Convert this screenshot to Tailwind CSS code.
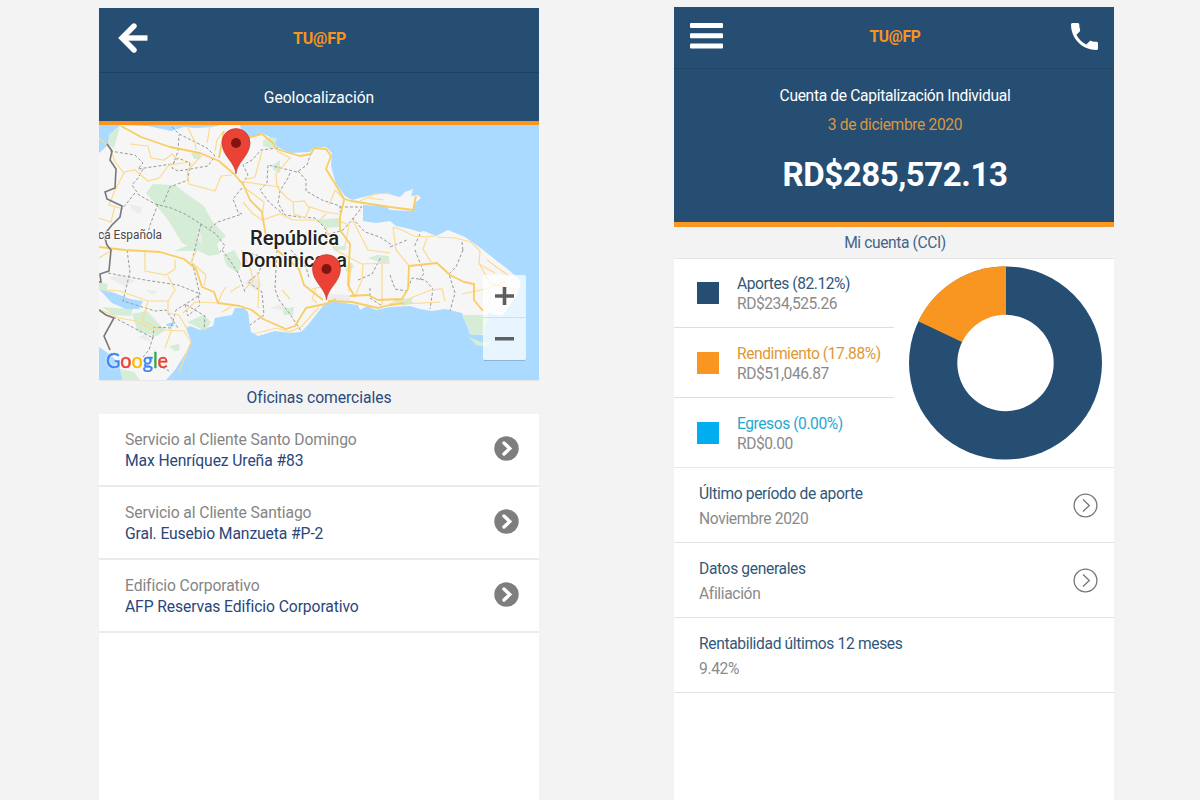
<!DOCTYPE html>
<html lang="es">
<head>
<meta charset="utf-8">
<title>TU@FP</title>
<script src="https://cdn.jsdelivr.net/npm/@tailwindcss/browser@4"></script>
</head>
<body class="w-[1200px] h-[800px] overflow-hidden bg-[#f3f3f3] font-['Roboto',sans-serif]">
<main class="flex h-[800px] pl-[99px] gap-[135px]">

  <section class="w-[440px] pt-2 shrink-0 flex flex-col">
    <header class="h-[65px] bg-[#254e72] flex items-center border-b border-[#1f4262] px-[19px]">
      <svg class="w-[31px] h-[30px] -mt-1 shrink-0" viewBox="0 0 31 30" fill="none" stroke="#fff" stroke-width="5.4"><path d="M29.500 15H5" /><path d="M16 3 4 15l12 12" stroke-linecap="round"/></svg>
      <h1 class="flex-1 text-center pr-[30px] -mt-[3px] text-[16px] tracking-[-0.15px] leading-5 font-bold text-[#f7941f]">TU@FP</h1>
    </header>
    <div class="h-12 bg-[#254e72] flex items-center justify-center text-white text-[15.6px] leading-5 pt-[1px]">Geolocalización</div>
    <div class="h-1 bg-[#fa941d]"></div>
    <svg class="w-[440px] h-[255px] block shrink-0" viewBox="99 125 440 255" font-family="Roboto, sans-serif">
      <rect x="99" y="125" width="440" height="255" fill="#aadaff"/>
      <path fill="#f6f6f6" d="M99 153 108 145 110 134 121 125 148 126 171 131 184 127 195 128 212 127 220 125H240L243 136 252 137 262 133 270 137 277 147 290 153 310 152 313 148 326 147 332 153 331 166 336 184 345 196 352 200 371 195 385 193 400 197 405 192 413 189 411 196 418 195 421 198 415 203 413 211 390 210 385 206 363 205 363 221 376 223 390 221 396 226 410 229 420 232 424 231 436 236 448 230 465 237 482 249 497 261 505 267 517 277 521 283 517 295 505 312 502 316 488 313 483 335 470 334 462 313 445 309 432 311 420 309 410 306 390 307 376 310 367 306 360 310 358 305 330 301 322 307 308 325 301 332 290 333 275 331 258 336 251 332 250 326 248 312 244 308 235 308 232 315 220 317 215 318 213 326 200 330 190 326 186 328 191 341 188 349 175 370 166 380H123L118 362 108 353 99 347Z"/>
      <g fill="#d5edd7">
        <path d="M109 134 120 127 114 148 108 145Z"/>
        <path d="M153 184 175 185 188 195 204 206 212 221 226 236 217 244 220 254 209 256 182 243 168 220 146 193Z M191 153h9v6h-6z M273 149l4-11-8-1-6 4v5z M273 165l7-5v13l-7-3z M315 220l24-2v9l-13 1z M333 246h13v4h-10z"/>
        <path d="M174 251h26l-6-8z M223 255l11-5 8 14-4 9-11-7z M99 282l9 2-3 10-6-4z M102 307 133 309 131 316 113 315Z M132 314 147 311 165 330 157 336 138 332Z M187 322 204 315 211 322 205 331Z M169 346l10-2 1 6-5 1z M120 369l14 3 6 8h-17z M282 309l12-2-1 8h-9z M368 258l9-3 12 1v6l-8 1z M345 270l5-8 4 4-5 8z M393 300l18-2 2 5-10 3z M462 315H489l-6 19-12 1z M469 337l12 5h10l-3 5-12-2z"/>
      </g>
      <g fill="#ececec"><path d="M130 204l12 3-2 7-8-4z M108 278l12-3 15 6-10 5z M145 290l13 1-5 4z M197 231l5 4v9l-5-4z M270 308l14-5v8z M325 294l25 1v7l-20-1z M244 283l10-7 8 8-4 7z M138 337l8-3 6 9z"/></g>
      <path fill="#aadaff" d="M100 290 112 292 130 299 143 301 139 309 126 309 112 303Z M166 324l8-2-1 5-6-1z"/>
      <g fill="none" stroke="#999" stroke-width="1" stroke-dasharray="3 2">
        <path d="M110 151 135 155 143 163 138 169 172 164 178 158 190 163"/>
        <path d="M172 127 179 134 207 148 215 156 208 166 178 171 172 168 178 151 179 135"/>
        <path d="M190 163 188 180 170 187 163 204"/>
        <path d="M143 169 138 178 132 185 139 195 155 204 171 208 185 214 201 224 216 234 225 246 220 252"/>
        <path d="M135 193 122 209 M158 204 150 225 147 237"/>
        <path d="M242 188 233 199 238 212 242 214 218 222 209 229"/>
        <path d="M278 148 261 150 252 160 243 165 248 175 241 186 M311 153 307 165 297 172 289 170 268 165 267 183 260 190 269 202 283 214 M298 171 306 180 306 191 322 200 340 206 340 212 M290 173 288 178 280 191 278 203 285 215 300 217 315 218 325 228 327 240"/>
        <path d="M340 207 362 207 352 220 343 230 327 235 M352 218 365 232 380 237 393 246"/>
        <path d="M127 250 130 272 123 301 155 311 166 310 178 328 M108 273 145 280 178 285 198 293 200 305 188 316 185 304 205 316 204 330"/>
        <path d="M201 224 192 261 200 295 176 310 171 328 154 327 153 338 115 318"/>
        <path d="M153 337 149 350 143 357 M158 365 169 371 M222 250 231 262 238 273 245 292 M241 251 264 257 259 273 248 282 262 292 264 315 250 325"/>
        <path d="M277 250 275 289 279 300 290 314 301 331 M291 250 306 267 309 278 M340 270 328 282 M358 280 372 274 381 257 M370 288 370 298 382 306"/>
        <path d="M390 275 395 289 407 291 412 278 425 280 433 289 430 309 M415 250 424 273 419 281 M463 250 456 267 449 274 455 293 450 311 M420 234 414 247 M462 242 463 251 M390 247 407 240"/>
      </g>
      <g fill="none" stroke="#fbdb8e" stroke-width="1.2">
        <path d="M99 138 111 149 115 162 124 173 115 190 109 205 120 208 M124 172 135 170 148 181 159 178 169 165 190 162 M130 144 148 146 151 158 164 160 172 154 178 160 M188 128 195 142 196 150 M210 126 207 143 M224 131 217 140 215 151 M202 155 187 171 189 184 215 191 221 176 232 175"/>
        <path d="M277 151 290 158 276 174 277 187 287 198 293 202 294 214 305 218 310 207 325 212 339 214 M262 151 255 177 244 180 M238 181 280 187 M293 202 304 201 310 209 M262 218 264 202 245 188 M243 202 252 213 262 220 280 214 293 220 320 220 326 214"/>
        <path d="M345 200 335 190 329 205 M360 201 375 194 390 193 M369 198l15 2"/>
        <path d="M99 218 111 222 115 206 M99 258 112 250 M145 250 145 271 166 275 175 269 175 260 M105 290 120 291 148 301 168 301 175 290 168 276 M148 301 142 321 162 330 184 331 191 342 179 372 M168 301 168 313 179 315 187 329 M196 251 191 262 206 275 204 286 M183 313 195 302 219 303 M99 309 119 318 136 321 155 331 M172 329 165 348"/>
        <path d="M218 303 222 293 226 287 M222 312 231 307 M242 251 251 270 253 281 245 289 M257 272 259 281 258 308 M282 290 290 299 M240 286 230 292 M312 289 325 286 337 282 M316 287 312 299 317 303 M253 334 277 328 290 332 302 326 319 307"/>
        <path d="M336 220 349 225 345 246 M352 219 368 250 390 253 M326 228 334 249 350 258 362 264 390 263 M351 263 349 292 M363 264 362 280 355 296 M382 264 382 307"/>
        <path d="M393 227 402 230 414 236 425 237 435 236 M393 227 396 250 410 267 M427 238 423 249 431 262 M437 237 455 238 471 242 480 251 479 264 495 273 M404 304 413 297 431 290 442 289 445 301 M404 304 440 302 M462 294 481 290 505 282 M480 265 490 283 518 290 M487 260 509 276 M390 304 403 299"/>
      </g>
      <g fill="none" stroke="#f9cd62" stroke-width="1.8" stroke-linejoin="round">
        <path d="M121 126 141 137 170 147 200 153 219 161 234 174 243 184 250 200 262 212 264 225 267 243"/>
        <path d="M224 131 219 158 M248 138 262 134 273 143 276 149 300 156 311 154 314 148 326 149 331 156 326 169 337 187 344 199 351 201 390 207 413 210 416 196"/>
        <path d="M344 200 340 217 340 230 350 244 349 263 348 285 355 297 M99 247 125 250 160 252 184 259 196 269 202 287 214 292 218 303 240 306 252 310 263 319 286 329 295 326 306 308 325 304 336 299"/>
        <path d="M276 249 299 269 304 285 323 300 M328 301 352 302 M350 296 368 295 378 300 402 299 408 289 409 266 437 263 450 275 464 282 474 284 474 300 483 311 M352 302 378 308 390 305 404 303"/>
      </g>
      <path fill="none" stroke="#787878" stroke-width="1.6" d="M107 144 112 151 110 160 116 169 115 188 105 192 107 199 122 206 120 217 112 225 104 235 107 245 111 250 109 271 100 274 101 282 99 282 M99 310 106 315 114 318 104 336 110 350"/>
      <g fill="#222" stroke="#fff" stroke-width="2" stroke-opacity=".75" paint-order="stroke">
        <text x="98" y="239" font-size="12.5" fill="#484848" textLength="64" lengthAdjust="spacingAndGlyphs">ca Española</text>
        <text x="250" y="245" font-size="20" font-weight="500" textLength="89" lengthAdjust="spacingAndGlyphs">República</text>
        <text x="241" y="267" font-size="20" font-weight="500" textLength="106" lengthAdjust="spacingAndGlyphs">Dominicana</text>
      </g>
      <defs>
        <g id="pin"><path fill="#ea4335" stroke="#bd3228" stroke-width=".6" d="M0 0C-1-12-14-18-14-31.500A14 14 0 0 1 14-31.500C14-18 1-12 0 0Z"/><circle cy="-31" r="5" fill="#811411"/></g>
      </defs>
      <use href="#pin" x="236" y="174"/>
      <use href="#pin" x="326.500" y="300"/>
      <path d="M484 360.500h41" stroke="#8fb4d2"/>
      <rect x="483" y="275" width="43" height="85" rx="2" fill="#fff" fill-opacity=".72"/>
      <path d="M483 317.500h43" stroke="#d5dfe7"/>
      <path d="M495 296h19M504.500 287v18M495 338.700h19" stroke="#5e5e5e" stroke-width="3.600"/>
      <text class="drop-shadow-[0_0_1px_#fff]" x="106" y="367.500" font-family="Lato, sans-serif" font-size="21" textLength="62" lengthAdjust="spacingAndGlyphs" stroke-width=".5"><tspan fill="#4285f4" stroke="#4285f4">G</tspan><tspan fill="#ea4335" stroke="#ea4335">o</tspan><tspan fill="#fbbc05" stroke="#fbbc05">o</tspan><tspan fill="#4285f4" stroke="#4285f4">g</tspan><tspan fill="#34a853" stroke="#34a853">l</tspan><tspan fill="#ea4335" stroke="#ea4335">e</tspan></text>
    </svg>
    <h2 class="h-[34px] shrink-0 border-t border-[#e5e7e9] flex items-center justify-center text-[15.7px] tracking-[-0.08px] leading-5 text-[#2b4a7a]">Oficinas comerciales</h2>
    <div class="flex-1 bg-white text-[15.7px] tracking-[-0.11px] leading-[21px]">
      <div class="h-[73px] flex items-center justify-between pl-[26px] pr-5 border-b-2 border-[#ebebeb]">
        <div class="pt-[1px]"><p class="text-[#858585]">Servicio al Cliente Santo Domingo</p><p class="text-[#2b467a]">Max Henríquez Ureña #83</p></div>
        <svg class="w-[25px] h-[25px] -mt-[3px]" viewBox="0 0 25 25"><circle cx="12.500" cy="12.500" r="12.200" fill="#7e7e7e"/><path d="m10 7 5.800 5.500L10 18" fill="none" stroke="#fff" stroke-width="3.400" stroke-linecap="round"/></svg>
      </div>
      <div class="h-[73px] flex items-center justify-between pl-[26px] pr-5 border-b-2 border-[#ebebeb]">
        <div class="pt-[1px]"><p class="text-[#858585]">Servicio al Cliente Santiago</p><p class="text-[#2b467a]">Gral. Eusebio Manzueta #P-2</p></div>
        <svg class="w-[25px] h-[25px] -mt-[3px]" viewBox="0 0 25 25"><circle cx="12.500" cy="12.500" r="12.200" fill="#7e7e7e"/><path d="m10 7 5.800 5.500L10 18" fill="none" stroke="#fff" stroke-width="3.400" stroke-linecap="round"/></svg>
      </div>
      <div class="h-[73px] flex items-center justify-between pl-[26px] pr-5 border-b-2 border-[#ebebeb]">
        <div class="pt-[1px]"><p class="text-[#858585]">Edificio Corporativo</p><p class="text-[#2b467a]">AFP Reservas Edificio Corporativo</p></div>
        <svg class="w-[25px] h-[25px] -mt-[3px]" viewBox="0 0 25 25"><circle cx="12.500" cy="12.500" r="12.200" fill="#7e7e7e"/><path d="m10 7 5.800 5.500L10 18" fill="none" stroke="#fff" stroke-width="3.400" stroke-linecap="round"/></svg>
      </div>
    </div>
  </section>

  <section class="w-[440px] pt-[7px] shrink-0 flex flex-col">
    <header class="h-[62px] bg-[#254e72] flex items-center justify-between border-b border-[#1f4668] pl-4 pr-4">
      <svg class="w-[33px] h-[26px] -mt-[3px]" viewBox="0 0 33 26" fill="#fff"><rect width="33" height="5" rx="1"/><rect y="10.300" width="33" height="5" rx="1"/><rect y="20.500" width="33" height="5" rx="1"/></svg>
      <h1 class="-mt-[2px] -ml-[4px] text-[15.6px] tracking-[-0.3px] leading-5 font-bold text-[#f7941f]">TU@FP</h1>
      <svg class="w-[27px] h-[27px] -mt-[2px]" viewBox="3 3 18 18" fill="#fff"><path d="M6.620 10.790c1.440 2.830 3.760 5.140 6.590 6.590l2.200-2.200c.27-.27.67-.36 1.020-.24 1.120.37 2.330.57 3.570.57.55 0 1 .45 1 1V20c0 .55-.45 1-1 1-9.390 0-17-7.610-17-17 0-.55.45-1 1-1h3.500c.55 0 1 .45 1 1 0 1.250.2 2.450.57 3.570.11.35.03.74-.25 1.020l-2.200 2.200z"/></svg>
    </header>
    <div class="h-[153px] bg-[#254e72] text-center pt-[17px] pl-[2px]">
      <p class="text-white text-[15.600px] tracking-[-0.33px] leading-5">Cuenta de Capitalización Individual</p>
      <p class="text-[#dd9640] text-[15.600px] tracking-[-0.36px] leading-5 mt-[9px]">3 de diciembre 2020</p>
      <p class="text-white text-[33px] tracking-[-0.45px] leading-10 font-bold mt-[20px]">RD$285,572.13</p>
    </div>
    <div class="h-[5px] bg-[#fa9722]"></div>
    <h2 class="h-8 flex items-center justify-center border-b border-[#e6e6e6] text-[15.600px] tracking-[-0.4px] leading-5 text-[#44658a] pl-[2px]">Mi cuenta (CCI)</h2>
    <div class="h-[209px] bg-white flex border-b border-[#e8e8e8] text-[15.600px] tracking-[-0.44px] leading-5">
      <div class="w-[220px]">
        <div class="h-[69px] flex items-center gap-[18px] pl-[23px] border-b border-[#dedede]">
          <span class="w-[22px] h-[22px] bg-[#254e72]"></span><div class="whitespace-nowrap pt-[1px]"><p class="text-[#315879]">Aportes (82.12%)</p><p class="text-[#8a8a8a]">RD$234,525.26</p></div>
        </div>
        <div class="h-[70px] flex items-center gap-[18px] pl-[23px] border-b border-[#dedede]">
          <span class="w-[22px] h-[22px] bg-[#f99622]"></span><div class="whitespace-nowrap pt-[2px]"><p class="text-[#df9735]">Rendimiento (17.88%)</p><p class="text-[#8a8a8a]">RD$51,046.87</p></div>
        </div>
        <div class="h-[70px] flex items-center gap-[18px] pl-[23px]">
          <span class="w-[22px] h-[22px] bg-[#00aeef]"></span><div class="whitespace-nowrap pt-[1px]"><p class="text-[#1fa9cf]">Egresos (0.00%)</p><p class="text-[#8a8a8a]">RD$0.00</p></div>
        </div>
      </div>
      <svg class="w-[220px] h-[208px]" viewBox="894 259 220 208"><circle cx="1005.500" cy="363" r="96.500" fill="#254e72"/><path d="M1006 363V266.300A96.700 96.700 0 0 0 918.300 321.200Z" fill="#f99622"/><circle cx="1005.500" cy="363" r="48.200" fill="#fff"/></svg>
    </div>
    <div class="flex-1 bg-white text-[15.600px] tracking-[-0.35px] leading-[25px]">
      <div class="h-[75px] flex items-center justify-between pl-[25px] pr-4 pt-[1px] border-b border-[#e2e2e2]">
        <div class="pt-[2px]"><p class="text-[#315879]">Último período de aporte</p><p class="text-[#8a8a8a]">Noviembre 2020</p></div>
        <svg class="w-[25px] h-[25px]" viewBox="0 0 25 25" fill="none" stroke="#777" stroke-width="1.300"><circle cx="12.500" cy="12.500" r="11.400"/><path d="m10 6.500 6.300 6-6.300 6"/></svg>
      </div>
      <div class="h-[75px] flex items-center justify-between pl-[25px] pr-4 pt-[1px] border-b border-[#e2e2e2]">
        <div class="pt-[2px]"><p class="text-[#315879]">Datos generales</p><p class="text-[#8a8a8a]">Afiliación</p></div>
        <svg class="w-[25px] h-[25px]" viewBox="0 0 25 25" fill="none" stroke="#777" stroke-width="1.300"><circle cx="12.500" cy="12.500" r="11.400"/><path d="m10 6.500 6.300 6-6.300 6"/></svg>
      </div>
      <div class="h-[75px] flex items-center justify-between pl-[25px] pr-4 pt-[1px] border-b border-[#e2e2e2]">
        <div class="pt-[2px]"><p class="text-[#315879]">Rentabilidad últimos 12 meses</p><p class="text-[#8a8a8a]">9.42%</p></div>
      </div>
    </div>
  </section>
</main>
</body>
</html>
